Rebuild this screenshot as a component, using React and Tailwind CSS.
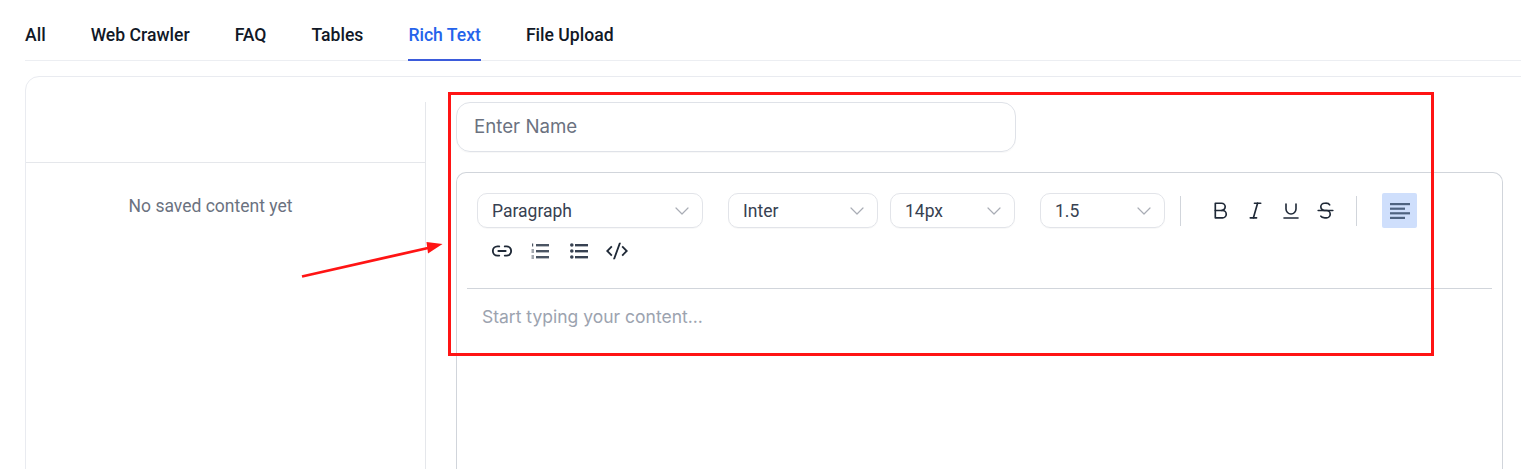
import React from 'react';
import { ChevronDown, Link2 } from 'lucide-react';
import { RiCodeSSlashLine } from 'react-icons/ri';
import { TbBold, TbItalic, TbUnderline, TbStrikethrough } from 'react-icons/tb';

const tabs = ['All', 'Web Crawler', 'FAQ', 'Tables', 'Rich Text', 'File Upload'];

function Select({ label, className }) {
  return (
    <div className={`flex h-[35px] items-center justify-between rounded-[10px] border border-[#e2e4e9] pl-[14px] pr-[8px] text-[17.5px] text-[#374151] shadow-[0_1px_1px_rgba(0,0,0,0.03)] ${className}`}>
      <span className="pt-[1px]">{label}</span>
      <ChevronDown size={24} strokeWidth={1.2} className="text-[#a9adb5]" />
    </div>
  );
}

function ToolButton({ children }) {
  return <button className="flex h-[35px] w-[35px] items-center justify-center text-[#1f2937]">{children}</button>;
}

function AlignIcon() {
  return (
    <svg width="20" height="16" viewBox="0 0 20 16" fill="currentColor">
      <rect x="0" y="0" width="20" height="2.2" />
      <rect x="0" y="4.6" width="15" height="2.2" />
      <rect x="0" y="9.2" width="20" height="2.2" />
      <rect x="0" y="13.8" width="15" height="2.2" />
    </svg>
  );
}

function OrderedIcon() {
  return (
    <svg width="18" height="16" viewBox="0 0 18 16" fill="currentColor">
      <rect x="5" y="1" width="13" height="2.4" />
      <rect x="5" y="7" width="13" height="2.4" />
      <rect x="5" y="13" width="13" height="2.4" />
      <rect x="1" y="0.5" width="1.2" height="3" />
      <rect x="0.5" y="6.5" width="2.5" height="1" />
      <rect x="0.5" y="8.5" width="2.5" height="1" />
      <rect x="0.5" y="12.5" width="2.5" height="1" />
      <rect x="0.5" y="14.5" width="2.5" height="1" />
    </svg>
  );
}

function BulletIcon() {
  return (
    <svg width="18" height="16" viewBox="0 0 18 16" fill="currentColor">
      <circle cx="1.8" cy="2" r="1.8" />
      <circle cx="1.8" cy="8" r="1.8" />
      <circle cx="1.8" cy="14" r="1.8" />
      <rect x="5" y="1" width="13" height="2.4" />
      <rect x="5" y="7" width="13" height="2.4" />
      <rect x="5" y="13" width="13" height="2.4" />
    </svg>
  );
}

export default function App() {
  return (
    <div className="relative h-[469px] w-[1521px] overflow-hidden bg-white font-['Inter',sans-serif]">
      <div className="ml-[25px] flex h-[61px] gap-[45px] border-b border-[#eceef2] pt-[24px] font-['Roboto',sans-serif] text-[17.6px] font-medium leading-[22px] text-[#111827]">
        {tabs.map((t) =>
          t === 'Rich Text' ? (
            <div key={t} className="-mb-px h-[37px] border-b-2 border-[#3b5bdb] text-[#2563eb]">{t}</div>
          ) : (
            <div key={t}>{t}</div>
          )
        )}
      </div>

      <div className="ml-[25px] mt-[15px] flex h-[500px] w-[1520px] rounded-tl-[14px] border border-[#e9ebf0] pt-[25px]">
        <div className="h-full w-[400px] shrink-0 border-r border-[#e5e7eb]">
          <div className="h-[61px] border-b border-[#e5e7eb]"></div>
          <p className="pr-[30px] pt-[32px] text-center font-['Roboto',sans-serif] text-[17.5px] leading-[22px] text-[#6b7280]">No saved content yet</p>
        </div>

        <div className="ml-[30px] w-[1047px] shrink-0">
          <div className="flex h-[50px] w-[560px] items-center rounded-[14px] border border-[#dfe2e8] pl-[17px] text-[18.7px] text-[#6b7280] shadow-[0_1px_1px_rgba(0,0,0,0.03)]">
            Enter Name
          </div>

          <div className="mt-[20px] h-[400px] rounded-t-[10px] border border-x-[#d1d5db] border-t-[#d1d5db] px-[10px] pt-[20px]">
            <div className="flex h-[35px] items-center pl-[10px] font-['Roboto',sans-serif]">
              <Select label="Paragraph" className="w-[226px]" />
              <Select label="Inter" className="ml-[25px] w-[150px]" />
              <Select label="14px" className="ml-[12px] w-[125px]" />
              <Select label="1.5" className="ml-[25px] w-[125px]" />
              <div className="ml-[15px] mr-[22px] h-[30px] w-px bg-[#d1d5db]"></div>
              <ToolButton><TbBold size={25} strokeWidth={1.6} /></ToolButton>
              <ToolButton><TbItalic size={25} strokeWidth={1.6} /></ToolButton>
              <ToolButton><TbUnderline size={24} strokeWidth={1.6} /></ToolButton>
              <ToolButton><TbStrikethrough size={25} strokeWidth={1.6} /></ToolButton>
              <div className="ml-[13px] mr-[25px] h-[30px] w-px bg-[#d1d5db]"></div>
              <button className="flex h-[35px] w-[35px] items-center justify-center rounded-[2px] bg-[#cfdffc] text-[#4f6380]">
                <AlignIcon />
              </button>
            </div>
            <div className="mt-[5px] flex h-[35px] items-center gap-[3px] pl-[17px]">
              <ToolButton><Link2 size={22} strokeWidth={2} /></ToolButton>
              <ToolButton><span className="text-[#4b5563]"><OrderedIcon /></span></ToolButton>
              <div className="ml-[1px]"><ToolButton><span className="text-[#374151]"><BulletIcon /></span></ToolButton></div>
              <ToolButton><RiCodeSSlashLine size={22} /></ToolButton>
            </div>
            <div className="mt-[20px] border-t border-[#d1d5db] pl-[15px] pt-[17px] text-[17.5px] leading-[22px] text-[#9ca3af]">
              Start typing your content...
            </div>
          </div>
        </div>
      </div>

      {/* annotation drawn over the screenshot */}
      <div className="absolute left-[448px] top-[92px] h-[264px] w-[986px] border-[3px] border-[#ff1414]"></div>
      <svg className="absolute left-[295px] top-[235px]" width="155" height="50" viewBox="0 0 155 50">
        <line x1="7" y1="41.5" x2="133" y2="13" stroke="#ff1414" strokeWidth="2.8" />
        <polygon points="147.5,9 131.5,7 133,18.5" fill="#ff1414" />
      </svg>
    </div>
  );
}
